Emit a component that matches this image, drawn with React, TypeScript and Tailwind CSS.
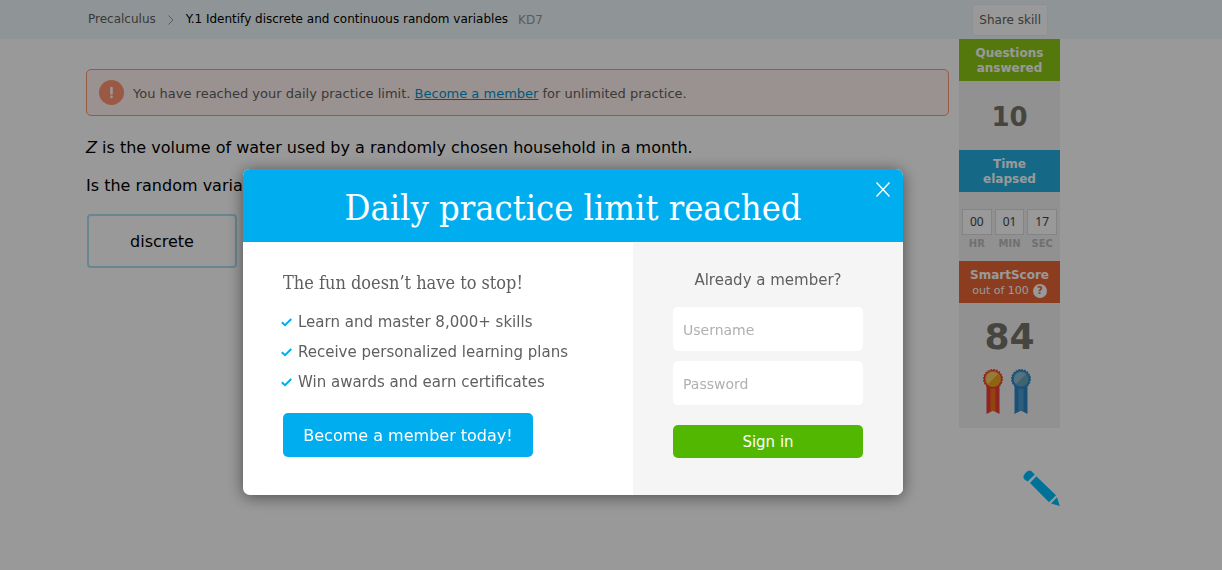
import React from "react";

const perks = [
  "Learn and master 8,000+ skills",
  "Receive personalized learning plans",
  "Win awards and earn certificates",
];

const timer = [
  { value: "00", unit: "HR" },
  { value: "01", unit: "MIN" },
  { value: "17", unit: "SEC" },
];

type RibbonProps = {
  tail: string;
  stripe: string;
  ring: string;
  rim: string;
  face: string;
  shine: string;
};

function Ribbon({ tail, stripe, ring, rim, face, shine }: RibbonProps) {
  return (
    <svg width="20" height="45" viewBox="0 0 20 45" aria-hidden="true">
      <path d="M3.500 14h13v31L10 41.500 3.500 45z" fill={tail} />
      <path d="M7.500 14h5v28.800L10 41.500l-2.500 1.300z" fill={stripe} />
      <circle cx="10" cy="10" r="9.300" fill={ring} />
      <circle cx="10" cy="10" r="9.400" fill="none" stroke={ring} strokeWidth="1.200" strokeDasharray="1.700 1.250" />
      <circle cx="10" cy="10" r="8" fill={rim} />
      <circle cx="10" cy="10" r="7" fill={face} />
      <path d="M5 15A7 7 0 0 1 15 5z" fill={shine} />
    </svg>
  );
}

function Header() {
  return (
    <header className="bg-[#eff8fa] pr-19">
      <div className="mx-auto flex h-[39px] max-w-[974px] items-center justify-between pr-[13px] pl-[2px] text-xs">
        <nav aria-label="Breadcrumb" className="flex items-center pb-[2px]">
          <a href="#precalculus" className="text-[#5f5f5f]">Precalculus</a>
          <svg className="mx-3 mt-[2px]" width="6" height="10" viewBox="0 0 6 10" fill="none" stroke="#999" aria-hidden="true">
            <path d="M.5.5 5 5 .5 9.500" />
          </svg>
          <span className="text-black">Y.1 Identify discrete and continuous random variables</span>
          <span className="ml-[10px] pt-[2px] text-[#999]">KD7</span>
        </nav>
        <button className="h-[30px] rounded-xs bg-white px-[6px] text-[#5f5f5f] shadow-[0_0_2px_#ddd]">Share skill</button>
      </div>
    </header>
  );
}

function Sidebar() {
  return (
    <aside className="w-[101px] shrink-0 bg-[#f2f2f2] text-center">
      <h2 className="bg-[#8cc814] pt-[7px] pb-[5px] text-xs leading-[15px] font-bold text-white">
        Questions
        <br />
        answered
      </h2>
      <p className="flex h-[69px] items-center justify-center pt-1 text-[26px] font-bold text-[#75736a]">10</p>
      <h2 className="bg-[#23b0e2] pt-[7px] pb-[5px] text-xs leading-[15px] font-bold text-white">
        Time
        <br />
        elapsed
      </h2>
      <div className="flex h-[69px] gap-[3px] px-[3px] pt-[17px]">
        {timer.map(({ value, unit }) => (
          <div key={unit} className="flex-1">
            <div className="border border-[#ddd] bg-white font-['Noto_Sans','Liberation_Sans',sans-serif] text-xs leading-6 text-[#444]">{value}</div>
            <div className="pt-[2px] text-[10px] leading-[14px] font-bold text-[#bbb]">{unit}</div>
          </div>
        ))}
      </div>
      <h2 className="bg-[#ea6535] pt-[7px] pb-[5px] text-xs leading-[15px] text-white">
        <span className="block font-bold">SmartScore</span>
        <span className="flex h-[15px] items-center justify-center gap-1 text-[11px]">
          out of 100
          <span className="flex size-[14px] items-center justify-center rounded-full bg-white text-[10px] font-bold text-[#ea6535]">?</span>
        </span>
      </h2>
      <div className="h-[125px] pt-[14px]">
        <p className="text-4xl font-bold text-[#75736a]">84</p>
        <div className="mt-3 flex justify-center gap-2 pr-[5px]">
          <Ribbon tail="#ee3b36" stripe="#f27417" ring="#ee3b36" rim="#f7a51c" face="#eda51f" shine="#f8cf60" />
          <Ribbon tail="#2c86c8" stripe="#4b9ad0" ring="#2c86c8" rim="#4b9ad0" face="#68a9b4" shine="#90bfd6" />
        </div>
      </div>
    </aside>
  );
}

function Practice() {
  return (
    <main className="min-w-0 flex-1 pt-[30px] text-base text-black">
      <div role="alert" className="flex h-[47px] items-center rounded-[5px] border border-[#ff9472] bg-[#fff4f0] pl-3 text-[13px] text-[#5f5f5f]">
        <svg className="mr-[9px]" width="25" height="25" viewBox="0 0 25 25" aria-hidden="true">
          <circle cx="12.5" cy="12.500" r="12.500" fill="#ff9472" />
          <path d="M12.500 8v5.500M12.500 16.800v.2" stroke="#fff" strokeWidth="2.600" strokeLinecap="round" />
        </svg>
        <p className="pt-[2px]">
          You have reached your daily practice limit.{" "}
          <a href="#join" className="text-[#0095d0] underline">Become a member</a> for unlimited practice.
        </p>
      </div>
      <p className="mt-5"><i>Z</i> is the volume of water used by a randomly chosen household in a month.</p>
      <p className="mt-[14px]">Is the random variable <i>Z</i></p>
      <div className="mt-4 ml-px flex gap-3">
        <button className="h-[54px] w-[150px] rounded-sm border-2 border-[#addfee] pt-px">discrete</button>
        <button className="h-[54px] w-[150px] rounded-sm border-2 border-[#addfee] pt-px">continuous</button>
      </div>
    </main>
  );
}

function LimitDialog() {
  return (
    <div className="fixed inset-0 flex items-start justify-center bg-black/40 pt-[169px] pr-19">
      <div role="dialog" aria-modal="true" aria-labelledby="limit-title" className="w-[660px] max-w-full overflow-hidden rounded-[7px] bg-white text-[15px] text-[#5f5f5f] shadow-[0_2px_16px_rgba(0,0,0,0.5)]">
        <div className="relative flex h-[73px] items-center justify-center bg-[#00aeef] pt-1 text-white">
          <h1 id="limit-title" className="font-['DejaVu_Serif_Condensed','DejaVu_Serif',serif] text-4xl">Daily practice limit reached</h1>
          <button aria-label="Close" className="absolute top-[13px] right-[13px]">
            <svg width="14" height="15" viewBox="0 0 14 15" stroke="#fff" strokeWidth="1.4" aria-hidden="true">
              <path d="m.5.5 13 14m0-14-13 14" />
            </svg>
          </button>
        </div>
        <div className="flex h-[253px]">
          <section className="min-w-0 flex-1 pt-7 pl-10">
            <h2 className="font-['DejaVu_Serif_Condensed','DejaVu_Serif',serif] text-[18px] leading-[26px]">The fun doesn’t have to stop!</h2>
            <ul className="mt-[11px] -ml-[2px]">
              {perks.map((perk) => (
                <li key={perk} className="flex items-center gap-[6px] leading-[30px]">
                  <svg width="11" height="9" viewBox="0 0 11 9" fill="none" stroke="#00aeef" strokeWidth="2" aria-hidden="true">
                    <path d="m.8 4.200 3.200 3L10.300 1" />
                  </svg>
                  {perk}
                </li>
              ))}
            </ul>
            <button className="mt-4 h-11 w-[250px] rounded-[5px] bg-[#00aeef] pt-px text-base text-white">Become a member today!</button>
          </section>
          <form className="w-[270px] bg-[#f5f5f5] px-10 pt-[27px]" onSubmit={(e) => e.preventDefault()}>
            <h2 className="text-center leading-[22px]">Already a member?</h2>
            <input aria-label="Username" placeholder="Username" className="mt-4 block h-11 w-full rounded-[5px] bg-white px-[10px] pt-[2px] text-sm placeholder:text-[#b0b0b0]" />
            <input aria-label="Password" type="password" placeholder="Password" className="mt-[10px] block h-11 w-full rounded-[5px] bg-white px-[10px] pt-[2px] text-sm placeholder:text-[#b0b0b0]" />
            <button className="mt-5 h-[33px] w-full rounded-[5px] bg-[#52b700] pt-px text-white">Sign in</button>
          </form>
        </div>
      </div>
    </div>
  );
}

export default function App() {
  return (
    <div className="min-h-screen bg-white font-['DejaVu_Sans',Verdana,sans-serif]">
      <Header />
      <div className="pr-19">
        <div className="mx-auto max-w-[974px]">
          <div className="flex items-start gap-[10px]">
            <Practice />
            <Sidebar />
          </div>
          <div className="mt-[42px] flex justify-end">
            <button aria-label="Scratchpad">
              <svg width="37" height="36" viewBox="0 0 37 36" fill="#00bfff" aria-hidden="true">
                <path d="M1.500 9.500C-.2 7.800.2 5.500 2.300 3.300 4.500.8 6.800-.2 8.500 1.300L11.800 4.500 4.700 11.500z" />
                <path d="M13.300 6.300 33 25.300 26 32.300 7 13z" />
                <path d="M34 27.300 36.800 36 28 33.500z" />
              </svg>
            </button>
          </div>
        </div>
      </div>
      <LimitDialog />
    </div>
  );
}
